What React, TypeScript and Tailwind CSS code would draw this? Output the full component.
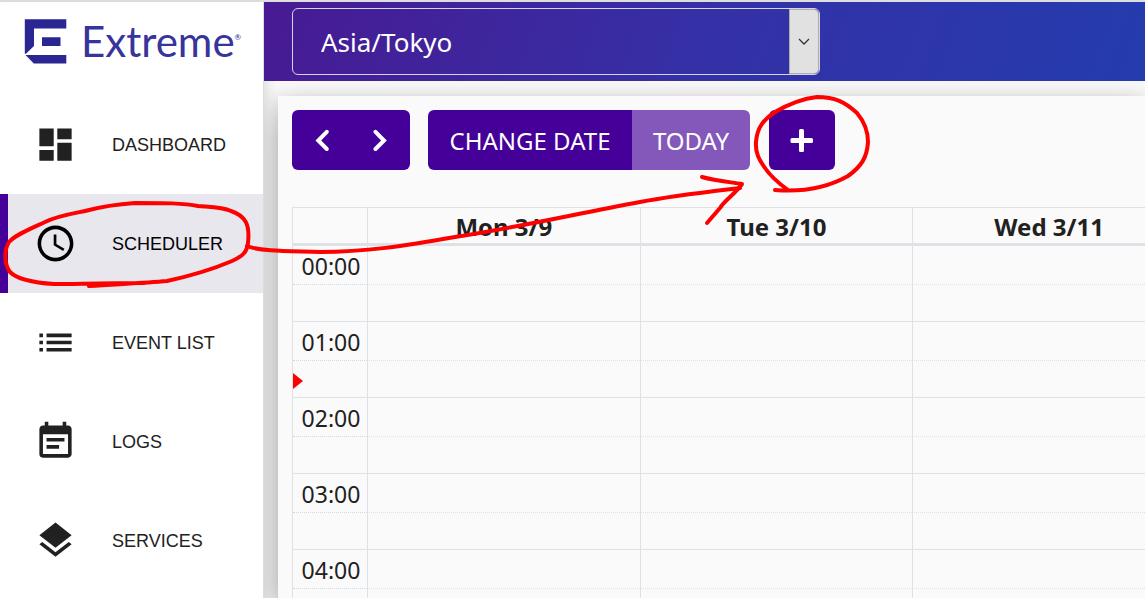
import { MdAccessTime, MdDashboard, MdEventNote, MdLayers, MdList } from 'react-icons/md';

const navItems = [
  { label: 'DASHBOARD', Icon: MdDashboard },
  { label: 'SCHEDULER', Icon: MdAccessTime, active: true },
  { label: 'EVENT LIST', Icon: MdList },
  { label: 'LOGS', Icon: MdEventNote },
  { label: 'SERVICES', Icon: MdLayers },
];

const days = ['Mon 3/9', 'Tue 3/10', 'Wed 3/11'];
const hours = ['00:00', '01:00', '02:00', '03:00', '04:00'];
const currentHour = '01:00';

function Logo() {
  return (
    <a href="#home" className="flex h-[93px] items-start pt-[17px] pl-6 text-[#2a2793]">
      <svg viewBox="0 0 43 45" className="h-[45px] w-[43px]" fill="currentColor" aria-hidden="true">
        <path d="M.8.3h41.500v9.200H10v17.500L2 34.800H.8z" />
        <path d="M18 18.300h18.500V27H18zM1.500 36h40.800v8.500H9.800z" />
      </svg>
      <span className="ml-3.5 font-[Lato,sans-serif] text-[42px] leading-[45px] text-[#37349b]">Extreme</span>
      <span className="mt-3 font-[Lato,sans-serif] text-[8px] leading-3">®</span>
    </a>
  );
}

function Sidebar() {
  return (
    <aside className="relative z-10 w-[264px] shrink-0 border-r border-[#dcdcdc] bg-white shadow-[0_10px_14px_rgba(0,0,0,0.16)]">
      <Logo />
      <nav>
        {navItems.map(({ label, Icon, active }) => (
          <a
            key={label}
            href={'#' + label.toLowerCase().replace(' ', '-')}
            aria-current={active ? 'page' : undefined}
            className={
              active
                ? 'flex h-[99px] items-center border-l-8 border-[#440099] bg-[#e8e7ed] pl-[26px] text-black'
                : 'flex h-[99px] items-center border-l-8 border-transparent pl-[26px] text-[#212121]'
            }
          >
            <Icon className="size-[43px]" />
            <span className="ml-[35px] font-['Liberation_Sans',sans-serif] text-lg">{label}</span>
          </a>
        ))}
      </nav>
    </aside>
  );
}

function Header() {
  return (
    <header className="relative z-10 h-[79px] bg-linear-[110deg] from-[#481a93] via-[#3530a6] to-[#243cae] pt-1.5 pl-7">
      <div className="relative h-[67px] w-[528px]">
        <select
          aria-label="Time zone"
          className="h-full w-full appearance-none rounded-md border border-[#d5d5e8] bg-transparent px-7 pt-0.5 text-[26px] text-white"
        >
          <option>Asia/Tokyo</option>
        </select>
        <span className="pointer-events-none absolute inset-y-px right-px flex w-[30px] items-center justify-center rounded-r-[5px] border border-[#adadad] bg-[#e1e1e1]">
          <svg viewBox="0 0 12 8" className="h-2 w-3" fill="none" stroke="#333" strokeWidth="1.300" aria-hidden="true">
            <path d="M1 1l5 5 5-5" />
          </svg>
        </span>
      </div>
    </header>
  );
}

function Toolbar() {
  return (
    <div className="flex text-2xl text-white">
      <div className="flex h-[60px] overflow-hidden rounded-md bg-[#440099]">
        <button aria-label="Previous" className="flex w-[59px] items-center justify-center">
          <svg viewBox="0 0 16 24" className="h-6 w-4" fill="none" stroke="currentColor" strokeWidth="4" strokeLinecap="round" strokeLinejoin="miter" aria-hidden="true">
            <path d="M12.800 3.800L4.300 12.500l8.500 8.500" />
          </svg>
        </button>
        <button aria-label="Next" className="flex w-[59px] items-center justify-center">
          <svg viewBox="0 0 16 24" className="h-6 w-4" fill="none" stroke="currentColor" strokeWidth="4" strokeLinecap="round" strokeLinejoin="miter" aria-hidden="true">
            <path d="M2.500 3.800l8.500 8.700L2.500 21" />
          </svg>
        </button>
      </div>
      <div className="ml-[18px] flex h-[60px] overflow-hidden rounded-md">
        <button className="w-[204px] bg-[#440099] pt-0.5">CHANGE DATE</button>
        <button className="w-[118px] bg-[#8458bb] pt-0.5">TODAY</button>
      </div>
      <button aria-label="Add event" className="ml-[19px] flex h-[60px] w-[66px] items-center justify-center rounded-md bg-[#440099]">
        <svg viewBox="0 0 24 24" className="size-6" fill="currentColor" aria-hidden="true">
          <rect x="9" y="1" width="5" height="23" rx="1.500" />
          <rect x="0.500" y="10" width="22.500" height="5" rx="1.500" />
        </svg>
      </button>
    </div>
  );
}

function Calendar() {
  return (
    <table className="mt-[37px] w-[893px] table-fixed border-separate border-spacing-0 border-t border-l border-[#dee2e6] text-[#212121]">
      <thead>
        <tr className="h-[38px]">
          <th className="w-[74px] border-b-3 border-[#dee2e6] p-0" />
          {days.map((day) => (
            <th key={day} className="border-b-3 border-l border-[#dee2e6] p-0 pt-0.5 text-2xl leading-[33px] font-bold">
              {day}
            </th>
          ))}
        </tr>
      </thead>
      {hours.map((hour) => (
        <tbody key={hour}>
          <tr className="h-[39px]">
            <th className="border-b border-dotted border-[#d5d9dd] p-0 pt-0.5 pl-0.5 text-[23px] leading-9 font-normal">{hour}</th>
            {days.map((day) => (
              <td key={day} className="border-b border-l border-[#dee2e6] p-0 [border-bottom-style:dotted]" />
            ))}
          </tr>
          <tr className="h-[37px]">
            <td className="border-b border-[#dee2e6] p-0">
              {hour === currentHour && (
                <span className="mt-1 block h-4 w-2.5 bg-[red] [clip-path:polygon(0_0,100%_50%,0_100%)]" />
              )}
            </td>
            {days.map((day) => (
              <td key={day} className="border-b border-l border-[#dee2e6] p-0" />
            ))}
          </tr>
        </tbody>
      ))}
    </table>
  );
}

function Annotations() {
  return (
    <svg
      viewBox="0 0 1145 598"
      className="pointer-events-none absolute top-0 left-0 z-20 h-[598px] w-[1145px]"
      fill="none"
      stroke="red"
      strokeWidth="4"
      strokeLinecap="round"
      strokeLinejoin="round"
      aria-hidden="true"
    >
      <path d="M89 286C120 284 145 283 167 281C190 276 211 270 232 261C243 256 247 252 248 243C250 225 246 216 231 211C222 207 208 207 198 206C184 203 164 203 135 203C120 204 100 207 85 211C70 214 57 216 45 222C30 229 15 235 9 242C4 250 4 264 10 272C18 280 38 283 54 284C75 284 100 283 145 283" />
      <path d="M247 246C262 252 292 251 320 252C365 252 405 246 455 237C520 227 575 214 640 202C670 196 706 192 740 188" />
      <path d="M702 177C716 181 730 182 742 184C735 194 724 201 720 208L707 223" />
      <path d="M775 190C800 192 825 189 848 176C862 166 867 157 868 142C868 128 862 119 857 113C845 102 835 97 817 97C800 99 787 105 775 112C763 120 757 128 756 142C755 155 761 162 765 168C771 177 777 182 788 190" />
    </svg>
  );
}

export default function App() {
  return (
    <div className="relative h-screen overflow-hidden bg-[#fafafa] font-['Noto_Sans',sans-serif]">
      <div className="flex h-full border-t-2 border-[#dedede]">
        <Sidebar />
        <div className="flex min-w-0 flex-1 flex-col">
          <Header />
          <main className="min-h-0 flex-1 pt-[15px] pl-3.5">
            <section className="h-full bg-[#fafafa] pt-3.5 pl-3.5 shadow-[0_14px_34px_rgba(0,0,0,0.3),0_4px_14px_rgba(0,0,0,0.12)]">
              <Toolbar />
              <Calendar />
            </section>
          </main>
        </div>
      </div>
      <Annotations />
    </div>
  );
}
